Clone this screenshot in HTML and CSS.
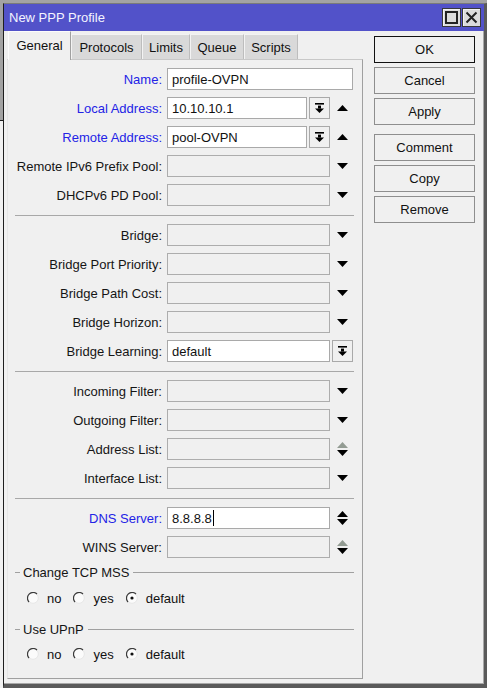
FILE: index.html
```html
<!DOCTYPE html>
<html>
<head>
<meta charset="utf-8">
<link rel="stylesheet" href="styles.css">
</head>
<body>
<div class="window">
  <div class="titlebar">
    <span class="title">New PPP Profile</span>
    <div class="tb-btns">
      <span class="tb-btn"><svg width="13" height="13" viewBox="0 0 13 13"><rect x="1" y="1" width="11" height="11" fill="none" stroke="#222" stroke-width="2"/></svg></span>
      <span class="tb-btn"><svg width="13" height="13" viewBox="0 0 13 13"><path d="M1.5 1.5 L11.5 11.5 M11.5 1.5 L1.5 11.5" stroke="#222" stroke-width="2"/></svg></span>
    </div>
  </div>
  <div class="main">
    <div class="left">
      <div class="tabs">
        <span class="tab active w-general">General</span>
        <span class="tab w-protocols">Protocols</span>
        <span class="tab w-limits">Limits</span>
        <span class="tab w-queue">Queue</span>
        <span class="tab w-scripts">Scripts</span>
      </div>
      <div class="panel">
        <div class="row"><span class="label blue">Name:</span><span class="input full">profile-OVPN</span></div>
        <div class="row"><span class="label blue">Local Address:</span><span class="input short">10.10.10.1</span><span class="ddbtn"><svg width="9" height="10" viewBox="0 0 9 10"><rect x="0" y="0" width="9" height="1.6" fill="#000"/><rect x="3" y="2.6" width="3" height="3" fill="#000"/><polygon points="0,5.4 9,5.4 4.5,10" fill="#000"/></svg></span><span class="arrow"><svg width="11" height="6" viewBox="0 0 11 6"><polygon points="0,6 11,6 5.5,0" fill="#000"/></svg></span></div>
        <div class="row"><span class="label blue">Remote Address:</span><span class="input short">pool-OVPN</span><span class="ddbtn"><svg width="9" height="10" viewBox="0 0 9 10"><rect x="0" y="0" width="9" height="1.6" fill="#000"/><rect x="3" y="2.6" width="3" height="3" fill="#000"/><polygon points="0,5.4 9,5.4 4.5,10" fill="#000"/></svg></span><span class="arrow"><svg width="11" height="6" viewBox="0 0 11 6"><polygon points="0,6 11,6 5.5,0" fill="#000"/></svg></span></div>
        <div class="row"><span class="label">Remote IPv6 Prefix Pool:</span><span class="input mid disabled"></span><span class="arrow"><svg width="11" height="6" viewBox="0 0 11 6"><polygon points="0,0 11,0 5.5,6" fill="#000"/></svg></span></div>
        <div class="row"><span class="label">DHCPv6 PD Pool:</span><span class="input mid disabled"></span><span class="arrow"><svg width="11" height="6" viewBox="0 0 11 6"><polygon points="0,0 11,0 5.5,6" fill="#000"/></svg></span></div>
        <div class="sep"></div>
        <div class="row"><span class="label">Bridge:</span><span class="input mid disabled"></span><span class="arrow"><svg width="11" height="6" viewBox="0 0 11 6"><polygon points="0,0 11,0 5.5,6" fill="#000"/></svg></span></div>
        <div class="row"><span class="label">Bridge Port Priority:</span><span class="input mid disabled"></span><span class="arrow"><svg width="11" height="6" viewBox="0 0 11 6"><polygon points="0,0 11,0 5.5,6" fill="#000"/></svg></span></div>
        <div class="row"><span class="label">Bridge Path Cost:</span><span class="input mid disabled"></span><span class="arrow"><svg width="11" height="6" viewBox="0 0 11 6"><polygon points="0,0 11,0 5.5,6" fill="#000"/></svg></span></div>
        <div class="row"><span class="label">Bridge Horizon:</span><span class="input mid disabled"></span><span class="arrow"><svg width="11" height="6" viewBox="0 0 11 6"><polygon points="0,0 11,0 5.5,6" fill="#000"/></svg></span></div>
        <div class="row"><span class="label">Bridge Learning:</span><span class="input mid">default</span><span class="ddbtn"><svg width="9" height="10" viewBox="0 0 9 10"><rect x="0" y="0" width="9" height="1.6" fill="#000"/><rect x="3" y="2.6" width="3" height="3" fill="#000"/><polygon points="0,5.4 9,5.4 4.5,10" fill="#000"/></svg></span></div>
        <div class="sep"></div>
        <div class="row"><span class="label">Incoming Filter:</span><span class="input mid disabled"></span><span class="arrow"><svg width="11" height="6" viewBox="0 0 11 6"><polygon points="0,0 11,0 5.5,6" fill="#000"/></svg></span></div>
        <div class="row"><span class="label">Outgoing Filter:</span><span class="input mid disabled"></span><span class="arrow"><svg width="11" height="6" viewBox="0 0 11 6"><polygon points="0,0 11,0 5.5,6" fill="#000"/></svg></span></div>
        <div class="row"><span class="label">Address List:</span><span class="input mid disabled"></span><span class="arrow"><svg width="11" height="14" viewBox="0 0 11 14"><polygon points="0,6 11,6 5.5,0" fill="#939c93"/><polygon points="0,8 11,8 5.5,14" fill="#000"/></svg></span></div>
        <div class="row"><span class="label">Interface List:</span><span class="input mid disabled"></span><span class="arrow"><svg width="11" height="6" viewBox="0 0 11 6"><polygon points="0,0 11,0 5.5,6" fill="#000"/></svg></span></div>
        <div class="sep"></div>
        <div class="row"><span class="label blue">DNS Server:</span><span class="input mid">8.8.8.8<span class="caret"></span></span><span class="arrow"><svg width="11" height="14" viewBox="0 0 11 14"><polygon points="0,6 11,6 5.5,0" fill="#000"/><polygon points="0,8 11,8 5.5,14" fill="#000"/></svg></span></div>
        <div class="row"><span class="label">WINS Server:</span><span class="input mid disabled"></span><span class="arrow"><svg width="11" height="14" viewBox="0 0 11 14"><polygon points="0,6 11,6 5.5,0" fill="#939c93"/><polygon points="0,8 11,8 5.5,14" fill="#000"/></svg></span></div>
        <div class="group"><span class="gline-short"></span><span class="gtext">Change TCP MSS</span><span class="gline"></span></div>
        <div class="radios first">
          <span class="radio"><svg width="12" height="12" viewBox="0 0 12 12"><circle cx="6" cy="6" r="5.3" fill="#fbfbfb" stroke="#e2e2e2" stroke-width="0.8"/><path d="M10 2 A5.66 5.66 0 0 0 2 10" fill="none" stroke="#3a3a3a" stroke-width="1.2"/></svg>no</span>
          <span class="radio"><svg width="12" height="12" viewBox="0 0 12 12"><circle cx="6" cy="6" r="5.3" fill="#fbfbfb" stroke="#e2e2e2" stroke-width="0.8"/><path d="M10 2 A5.66 5.66 0 0 0 2 10" fill="none" stroke="#3a3a3a" stroke-width="1.2"/></svg>yes</span>
          <span class="radio"><svg width="12" height="12" viewBox="0 0 12 12"><circle cx="6" cy="6" r="5.3" fill="#fbfbfb" stroke="#e2e2e2" stroke-width="0.8"/><path d="M10 2 A5.66 5.66 0 0 0 2 10" fill="none" stroke="#3a3a3a" stroke-width="1.2"/><circle cx="6" cy="6" r="1.6" fill="#111"/></svg>default</span>
        </div>
        <div class="group second"><span class="gline-short"></span><span class="gtext">Use UPnP</span><span class="gline"></span></div>
        <div class="radios">
          <span class="radio"><svg width="12" height="12" viewBox="0 0 12 12"><circle cx="6" cy="6" r="5.3" fill="#fbfbfb" stroke="#e2e2e2" stroke-width="0.8"/><path d="M10 2 A5.66 5.66 0 0 0 2 10" fill="none" stroke="#3a3a3a" stroke-width="1.2"/></svg>no</span>
          <span class="radio"><svg width="12" height="12" viewBox="0 0 12 12"><circle cx="6" cy="6" r="5.3" fill="#fbfbfb" stroke="#e2e2e2" stroke-width="0.8"/><path d="M10 2 A5.66 5.66 0 0 0 2 10" fill="none" stroke="#3a3a3a" stroke-width="1.2"/></svg>yes</span>
          <span class="radio"><svg width="12" height="12" viewBox="0 0 12 12"><circle cx="6" cy="6" r="5.3" fill="#fbfbfb" stroke="#e2e2e2" stroke-width="0.8"/><path d="M10 2 A5.66 5.66 0 0 0 2 10" fill="none" stroke="#3a3a3a" stroke-width="1.2"/><circle cx="6" cy="6" r="1.6" fill="#111"/></svg>default</span>
        </div>
      </div>
    </div>
    <div class="buttons">
      <span class="btn default">OK</span>
      <span class="btn">Cancel</span>
      <span class="btn">Apply</span>
      <span class="btn gapped">Comment</span>
      <span class="btn">Copy</span>
      <span class="btn">Remove</span>
    </div>
  </div>
</div>
</body>
</html>
```

FILE: styles.css
```css
* { box-sizing: border-box; }
html, body { margin: 0; padding: 0; }
body {
  width: 487px;
  height: 688px;
  overflow: hidden;
  padding: 3px 0 0 3px;
  background: linear-gradient(#a3a3a3 0 120px, #1a1a1a 120px 121px, #f0f0f0 121px);
  font-family: "Liberation Sans", Arial, sans-serif;
  font-size: 13px;
  color: #111;
}
.window {
  width: 484px;
  height: 685px;
  background: #f0f0f0;
  border-top: 1px solid #7a7a7a;
  border-left: 1px solid #1e1e1e;
  border-right: 3px solid #5a5a5a;
  border-bottom: 4px solid #5a5a5a;
  box-shadow: inset -1px -1px 0 #a8a8a8;
  display: flex;
  flex-direction: column;
}
.titlebar {
  height: 27px;
  flex: none;
  background: #5252c9;
  display: flex;
  align-items: center;
  justify-content: space-between;
  padding: 0 3px 0 5px;
}
.title { color: #f4f4ff; font-size: 13px; }
.tb-btns { display: flex; gap: 1px; }
.tb-btn {
  width: 19px;
  height: 19px;
  background: #dcdcdc;
  border: 1px solid #3a3a3a;
  box-shadow: inset 1px 1px 0 #f4f4f4;
  display: flex;
  align-items: center;
  justify-content: center;
}
.main {
  flex: 1;
  display: flex;
  padding-left: 3px;
}
.left { width: 356px; display: flex; flex-direction: column; }
.tabs {
  height: 28px;
  display: flex;
  align-items: flex-end;
  padding-left: 1px;
}
.tab {
  height: 25px;
  background: #d9d9d9;
  border-top: 1px solid #f3f3f3;
  border-left: 1px solid #f3f3f3;
  border-right: 1px solid #bdbdbd;
  display: flex;
  align-items: center;
  justify-content: center;
}
.tab.active {
  height: 29px;
  margin-bottom: -1px;
  background: #f0f0f0;
  border-top: 1px solid #fcfcfc;
  border-left: 1px solid #fcfcfc;
  border-right: 1px solid #a0a0a0;
  position: relative;
  z-index: 1;
  padding-bottom: 2px;
}
.w-general { width: 63px; }
.w-protocols { width: 71px; }
.w-limits { width: 48px; }
.w-queue { width: 54px; }
.w-scripts { width: 54px; }
.panel {
  height: 620px;
  border-top: 1px solid #c8c8c8;
  border-left: 1px solid #e6e6e6;
  border-right: 1px solid #a0a0a0;
  border-bottom: 1px solid #a0a0a0;
  padding-top: 8px;
  display: flex;
  flex-direction: column;
}
.row {
  display: flex;
  align-items: center;
  height: 22px;
  flex: none;
  margin-bottom: 7px;
}
.label {
  width: 154px;
  margin-right: 5px;
  text-align: right;
  white-space: nowrap;
  color: #151515;
}
.label.blue { color: #2323e6; }
.input {
  height: 22px;
  background: #fff;
  border: 1px solid #a9a9a9;
  display: flex;
  align-items: center;
  padding-left: 4px;
  color: #111;
}
.input.disabled { background: #f0f0f0; border-color: #adadad; }
.input.full { width: 186px; }
.input.mid { width: 163px; }
.input.short { width: 140px; }
.ddbtn {
  width: 21px;
  height: 22px;
  margin-left: 2px;
  border: 1px solid #a9a9a9;
  background: #f0f0f0;
  display: flex;
  align-items: center;
  justify-content: center;
}
.arrow {
  width: 23px;
  display: flex;
  justify-content: center;
  align-items: center;
  padding-left: 1px;
}
.arrow svg { display: block; }
.caret {
  display: inline-block;
  width: 1px;
  height: 16px;
  background: #000;
  margin-left: 1px;
}
.sep {
  height: 1px;
  flex: none;
  background: #a8a8a8;
  margin: 2px 8px 8px 7px;
}
.group {
  display: flex;
  align-items: center;
  height: 14px;
  flex: none;
  margin-right: 8px;
  margin-left: 7px;
}
.group.second { margin-top: 16px; }
.gline-short { width: 5px; height: 1px; background: #a0a0a0; margin-right: 3px; }
.gline { flex: 1; height: 1px; background: #a0a0a0; margin-left: 4px; }
.gtext { color: #151515; }
.radios {
  display: flex;
  align-items: center;
  height: 16px;
  flex: none;
  margin-top: 10px;
  padding-left: 19px;
}
.radios.first { margin-top: 11px; }
.radio {
  display: flex;
  align-items: center;
  margin-right: 12px;
}
.radio svg { display: block; margin-right: 8px; }
.buttons {
  width: 101px;
  margin-left: 11px;
  padding-top: 5px;
  display: flex;
  flex-direction: column;
}
.btn {
  height: 27px;
  margin-bottom: 4px;
  border: 1px solid #8e8e8e;
  background: #f0f0f0;
  display: flex;
  align-items: center;
  justify-content: center;
  color: #111;
}
.btn.default { border: 1px solid #111; }
.btn.gapped { margin-top: 5px; }
```
